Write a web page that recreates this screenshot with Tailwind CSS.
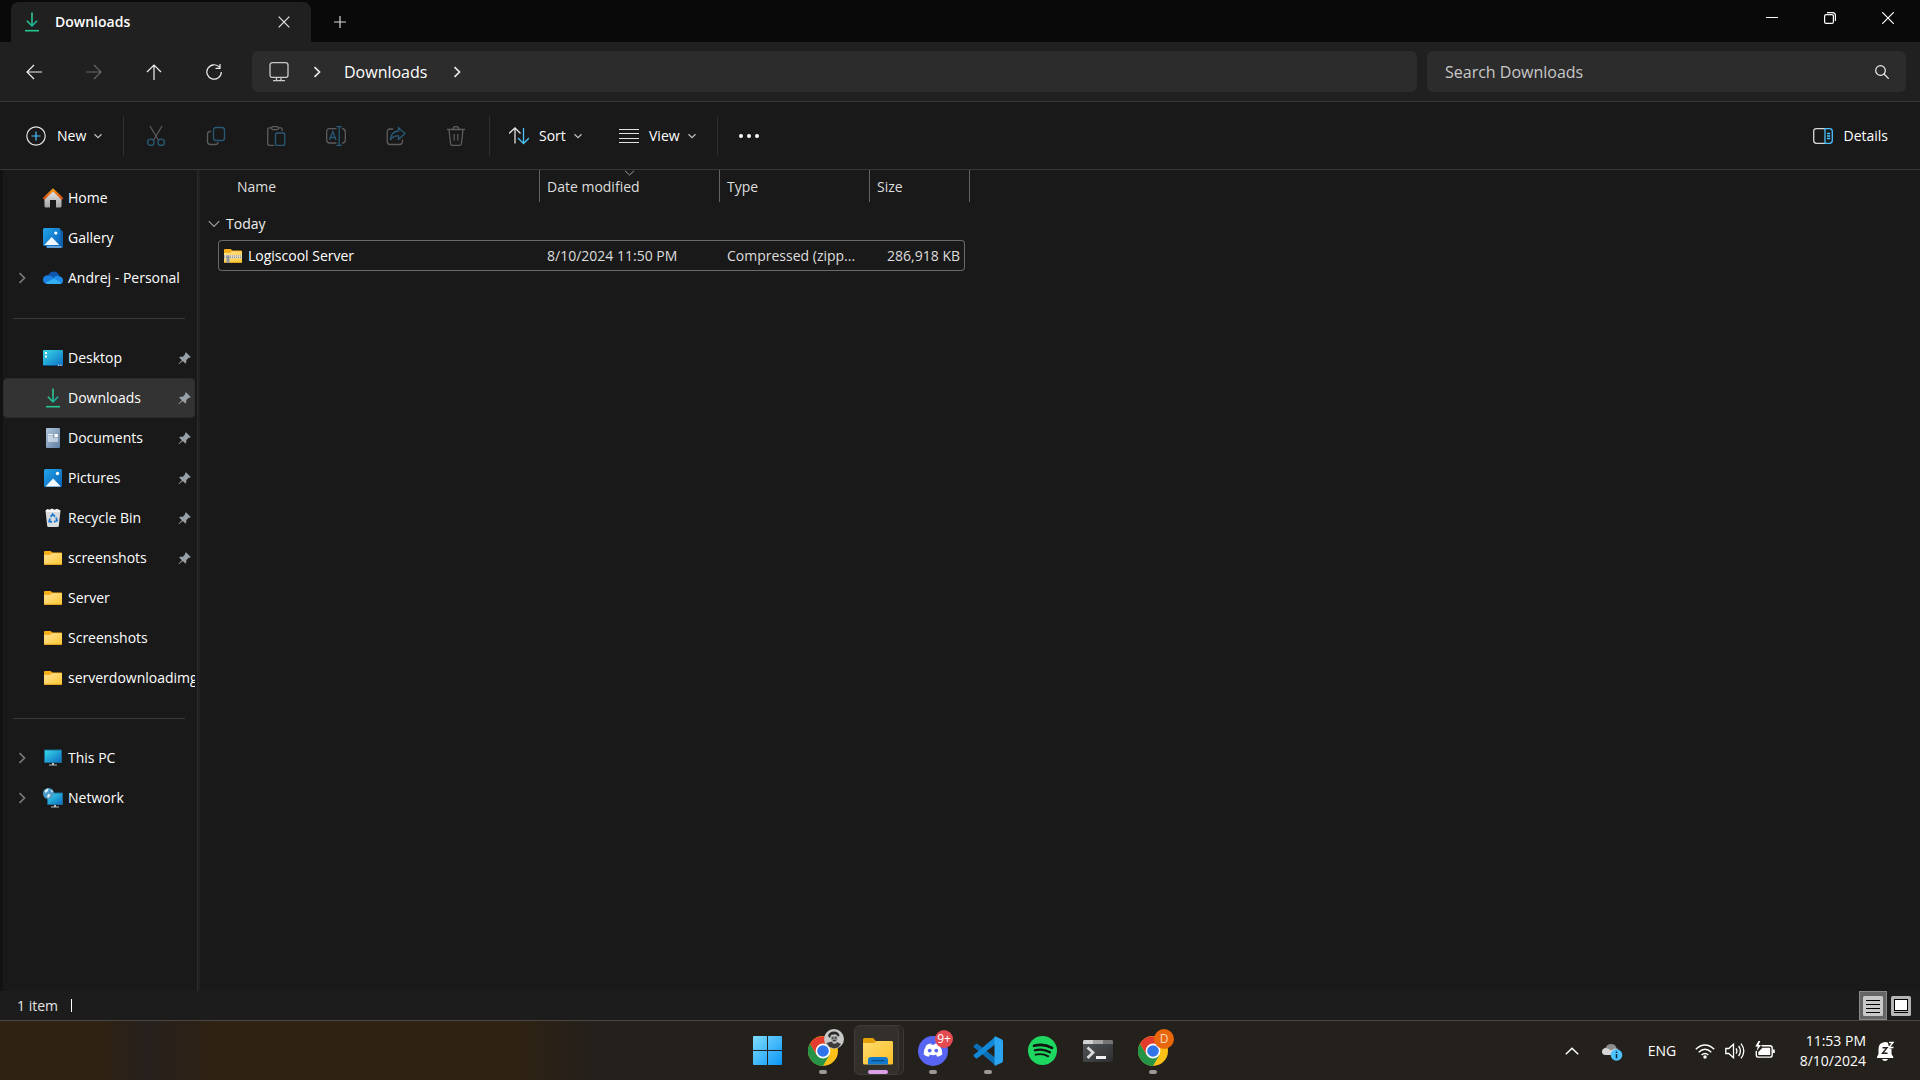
<!DOCTYPE html>
<html lang="en">
<head>
<meta charset="utf-8">
<meta name="viewport" content="width=device-width, initial-scale=1">
<title>Downloads</title>
<script src="https://cdn.jsdelivr.net/npm/@tailwindcss/browser@4"></script>
</head>
<body class="flex h-screen flex-col overflow-hidden bg-[#191919] font-['Open_Sans','Noto_Sans',sans-serif] text-sm text-white">

<!-- Shared icon shapes; kept rendered at zero size so the gradients stay usable -->
<svg class="absolute size-0" aria-hidden="true">
  <defs>
    <linearGradient id="g-green" x1="0" y1="0" x2="1" y2="1"><stop offset="0" stop-color="#3ddc84"/><stop offset="1" stop-color="#12a5a0"/></linearGradient>
    <linearGradient id="g-blue" x1="0" y1="0" x2="1" y2="1"><stop offset="0" stop-color="#22a4ea"/><stop offset="1" stop-color="#0a62b8"/></linearGradient>
    <linearGradient id="g-cyan" x1="0" y1="0" x2="1" y2="1"><stop offset="0" stop-color="#37d8e6"/><stop offset="1" stop-color="#0f6fc6"/></linearGradient>
    <linearGradient id="g-folder" x1="0" y1="0" x2="1" y2="1"><stop offset="0" stop-color="#ffe394"/><stop offset="1" stop-color="#fdc735"/></linearGradient>
    <linearGradient id="g-explorer" x1="0" y1="0" x2="1" y2="1"><stop offset="0" stop-color="#ffdc6e"/><stop offset="1" stop-color="#fcbf26"/></linearGradient>
    <linearGradient id="g-doc" x1="0" y1="0" x2="1" y2="1"><stop offset="0" stop-color="#b2c6dc"/><stop offset="1" stop-color="#5f7fa3"/></linearGradient>
    <linearGradient id="g-grey" x1="0" y1="0" x2="0" y2="1"><stop offset="0" stop-color="#e8e8e8"/><stop offset="1" stop-color="#a3a3a3"/></linearGradient>
    <linearGradient id="g-roof" x1="0" y1="0" x2="0" y2="1"><stop offset="0" stop-color="#f59a1b"/><stop offset="1" stop-color="#d4480f"/></linearGradient>
    <linearGradient id="g-win" x1="0" y1="0" x2="1" y2="1"><stop offset="0" stop-color="#7fdcff"/><stop offset="1" stop-color="#0a96f4"/></linearGradient>
    <linearGradient id="g-term" x1="0" y1="0" x2="1" y2="1"><stop offset="0" stop-color="#55585b"/><stop offset="1" stop-color="#2c2e30"/></linearGradient>
  </defs>
  <symbol id="download" viewBox="0 0 20 20"><path d="M4.300 9.300 10 15l5.700-5.700-1.200-1.100-3.700 3.700V.5H9.200v11.400L5.500 8.200z" fill="url(#g-green)"/><path d="M3 18.700h14" stroke="#27c690" stroke-width="1.600" fill="none"/></symbol>
  <symbol id="chev-r" viewBox="0 0 12 12"><path d="M3.500 1.200 8.500 6l-5 4.800" fill="none" stroke="currentColor" stroke-width="1.700"/></symbol>
  <symbol id="chev-d" viewBox="0 0 10 10"><path d="M1.500 3.200 5 6.600l3.500-3.400" fill="none" stroke="currentColor" stroke-width="1.200"/></symbol>
  <symbol id="pin" viewBox="0 0 14 14"><path d="M8.600.3 13.700 5.400 12.600 6.300 11.700 6.200 9 8.700 8.800 11.600 7.900 12.500 5 9.700.9 13.300.4 12.900 4.100 8.900 1.300 6 2.200 5.200 5.200 5 7.700 2.300 7.600 1.300Z" fill="#98a0a8"/></symbol>
  <symbol id="folder" viewBox="0 0 20 20"><path d="M1 4q0-1 1-1h5.500l2 1.500H18q1 0 1 1V8H1z" fill="#f7b01b"/><path d="M1 7h6l2-1.700h10V16q0 .8-.8.800H1.800Q1 16.800 1 16z" fill="url(#g-folder)"/><path d="M1 16.300h18" stroke="#eaa91f" stroke-width="1"/></symbol>
  <symbol id="chrome" viewBox="0 0 30 30"><circle cx="15" cy="15" r="15" fill="#fbc116"/><path d="M2 7.500A15 15 0 0 0 15 30l6.500-11.200L15 15 8.500 18.700z" fill="#269447"/><path d="M2 7.500 8.600 18.800 15 8h13A15 15 0 0 0 2 7.500z" fill="#e33b2e"/><circle cx="15" cy="15" r="7.400" fill="#fff"/><circle cx="15" cy="15" r="5.800" fill="#2f74e8"/></symbol>
</svg>

<!-- Title bar -->
<header class="flex h-[42px] shrink-0 items-start justify-between bg-[#090909]">
  <div class="flex h-full items-end pl-[11px]">
    <div class="flex h-10 w-[300px] items-center rounded-t-lg bg-[#202020] pl-[11px] pr-[19px]">
      <svg class="size-5"><use href="#download"/></svg>
      <span class="ml-[13px] flex-1 font-semibold">Downloads</span>
      <button aria-label="Close tab" class="flex size-4 items-center justify-center"><svg class="size-3" viewBox="0 0 12 12"><path d="m.7.7 10.600 10.600M11.300.7.7 11.300" stroke="#e8e8e8" stroke-width="1.200"/></svg></button>
    </div>
    <button aria-label="New tab" class="flex h-10 w-[58px] items-center justify-center"><svg class="size-3" viewBox="0 0 12 12"><path d="M6 0v12M0 6h12" stroke="#d8d8d8" stroke-width="1.200"/></svg></button>
  </div>
  <div class="flex pr-[3px]">
    <button aria-label="Minimize" class="flex h-9 w-[58px] items-center justify-center"><svg class="size-3" viewBox="0 0 12 12"><path d="M0 5.500h12" stroke="#fff"/></svg></button>
    <button aria-label="Restore" class="flex h-9 w-[58px] items-center justify-center"><svg class="size-3" viewBox="0 0 12 12" fill="none" stroke="#fff" stroke-width="1.200"><rect x=".6" y="2.600" width="8.800" height="8.800" rx="1.500"/><path d="M3 .6h5.500q2.900 0 2.900 2.900V9"/></svg></button>
    <button aria-label="Close" class="flex h-9 w-[58px] items-center justify-center"><svg class="size-3" viewBox="0 0 12 12"><path d="m.2.2 11.600 11.600M11.800.2.2 11.800" stroke="#fff" stroke-width="1.200"/></svg></button>
  </div>
</header>

<!-- Navigation -->
<nav aria-label="Location" class="flex h-[60px] shrink-0 items-center border-b border-[#3a3a3a] bg-[#202020] pl-1 pr-[14px] text-base">
  <button aria-label="Back" class="flex size-[60px] items-center justify-center"><svg class="size-4" viewBox="0 0 16 16" fill="none" stroke="#f0f0f0" stroke-width="1.200"><path d="M16 8H1M8 1 1 8l7 7"/></svg></button>
  <button aria-label="Forward" disabled class="flex size-[60px] items-center justify-center"><svg class="size-4" viewBox="0 0 16 16" fill="none" stroke="#666" stroke-width="1.200"><path d="M0 8h15M8 1l7 7-7 7"/></svg></button>
  <button aria-label="Up" class="flex size-[60px] items-center justify-center"><svg class="size-4" viewBox="0 0 16 16" fill="none" stroke="#f0f0f0" stroke-width="1.200"><path d="M8 16V1M1 8l7-7 7 7"/></svg></button>
  <button aria-label="Refresh" class="flex size-[60px] items-center justify-center"><svg class="size-4" viewBox="0 0 16 16" fill="none" stroke="#f0f0f0" stroke-width="1.200"><path d="M13.500 3.200A7.200 7.200 0 1 0 15.300 8M14 0v4.400H9.500"/></svg></button>
  <div class="ml-2 flex h-[41px] flex-1 items-center rounded-md bg-[#2c2c2c] pl-4">
    <svg class="size-[22px]" viewBox="0 0 22 22" fill="none" stroke="#c9c9c9" stroke-width="1.300"><rect x="2" y="1.600" width="18" height="14.800" rx="2.500"/><path d="M8.500 16.500v3M13 16.500v3M5 19.700h12"/></svg>
    <svg class="ml-[21px] size-3 text-[#e8e8e8]"><use href="#chev-r"/></svg>
    <a href="#" class="ml-[21px] w-[106px]">Downloads</a>
    <svg class="ml-[1px] size-3 text-[#e8e8e8]"><use href="#chev-r"/></svg>
  </div>
  <label class="ml-[10px] flex h-[41px] w-[479px] items-center rounded-md bg-[#2c2c2c] pl-[18px] pr-[17px]">
    <input type="text" aria-label="Search Downloads" placeholder="Search Downloads" class="min-w-0 flex-1 bg-transparent outline-none placeholder:text-[#c8c8c8]">
    <svg class="size-[14px]" viewBox="0 0 14 14" fill="none" stroke="#f0f0f0" stroke-width="1.200"><circle cx="5.500" cy="5.500" r="4.800"/><path d="m9 9 4.700 4.700"/></svg>
  </label>
</nav>

<!-- Command bar -->
<div role="toolbar" aria-label="Commands" class="flex h-[68px] shrink-0 items-center border-b border-[#383838] px-[26px]">
  <button class="flex items-center"><svg class="size-5" viewBox="0 0 20 20" fill="none" stroke="#e0e0e0" stroke-width="1.200"><circle cx="10" cy="10" r="9.200"/><path d="M10 5.500v9M5.500 10h9" stroke="#4cc2ff"/></svg><span class="ml-[11px] w-9 text-left">New</span><svg class="size-[10px] text-[#c0c0c0]"><use href="#chev-d"/></svg></button>
  <span class="ml-5 mr-[2px] h-10 w-px bg-[#2e2e2e]"></span>
  <button aria-label="Cut" disabled class="flex h-10 w-[60px] items-center justify-center"><svg class="size-5" viewBox="0 0 20 20" fill="none" stroke="#5c5c5c" stroke-width="1.200"><path d="M4 0l8.500 14.200M16 0 7.500 14.200"/><g stroke="#285a78" stroke-width="1.400"><circle cx="4.800" cy="16.300" r="3.200"/><circle cx="15.200" cy="16.300" r="3.200"/></g></svg></button>
  <button aria-label="Copy" disabled class="flex h-10 w-[60px] items-center justify-center"><svg class="size-5" viewBox="0 0 20 20" fill="none" stroke="#5c5c5c" stroke-width="1.300"><path d="M5 5.500H4q-2.500 0-2.500 2.500v7.500q0 3 3 3h5q2.500 0 2.500-2.500"/><rect x="7.500" y="1.500" width="11" height="13" rx="2.500" stroke="#285a78"/></svg></button>
  <button aria-label="Paste" disabled class="flex h-10 w-[60px] items-center justify-center"><svg class="size-5" viewBox="0 0 20 20" fill="none" stroke="#5c5c5c" stroke-width="1.300"><path d="M5.500 1.800h-2Q1.700 1.800 1.700 3.600v14q0 1.800 1.800 1.800H8M12.500 1.800h2q1.800 0 1.800 1.800V5"/><rect x="5.500" y=".6" width="7" height="3" rx="1.500"/><rect x="9.500" y="7" width="9.300" height="12.400" rx="1.500" stroke="#285a78"/></svg></button>
  <button aria-label="Rename" disabled class="flex h-10 w-[60px] items-center justify-center"><svg class="size-5" viewBox="0 0 20 20" fill="none" stroke="#5c5c5c" stroke-width="1.300"><path d="M10.500 2.700h-7Q.7 2.700.7 5.500v8.500q0 3 3 3h6.800M16 2.700q3.300.3 3.300 3v8.300q0 3-3.300 3"/><path d="M13.200.7v18.600M10.500.7H16M10.500 19.300H16M3.500 14 6.800 5.500 10 14M4.600 11.500H9" stroke="#285a78"/></svg></button>
  <button aria-label="Share" disabled class="flex h-10 w-[60px] items-center justify-center"><svg class="size-5" viewBox="0 0 20 20" fill="none" stroke="#5c5c5c" stroke-width="1.300"><path d="M7 3H4Q1.200 3 1.200 5.800v9.700q0 3 3 3h9.300q3 0 3-3V13.500"/><path d="M12.500 1.700 19 7.500l-6.500 5.800V10q-5.500-.6-8 4 .3-8.500 8-9z" stroke="#285a78"/></svg></button>
  <button aria-label="Delete" disabled class="flex h-10 w-[60px] items-center justify-center"><svg class="size-5" viewBox="0 0 20 20" fill="none" stroke="#5c5c5c" stroke-width="1.300"><path d="M1 3.500h18M7 3.500q0-3 3-3t3 3M3 3.500l1.500 13.800q.2 2 2.200 2h6.600q2 0 2.200-2L17 3.500M8.200 8v6.500M11.800 8v6.500"/></svg></button>
  <span class="ml-[3px] mr-[19px] h-10 w-px bg-[#2e2e2e]"></span>
  <button class="flex items-center"><svg class="size-5" viewBox="0 0 20 20" fill="none" stroke="#e0e0e0" stroke-width="1.300"><path d="M6 17.500V2M0 7.500 6 2l5.500 5.500"/><path d="M14.500 2v15.500M9 12l5.500 5.500 5.500-5.500" stroke="#4cc2ff"/></svg><span class="ml-[10px] w-[34px] text-left">Sort</span><svg class="size-[10px] text-[#c0c0c0]"><use href="#chev-d"/></svg></button>
  <button class="ml-9 flex items-center"><svg class="size-5" viewBox="0 0 20 20" stroke="#e0e0e0"><path d="M0 3.500h20M0 7.500h20M0 12.500h20M0 16.500h20"/></svg><span class="ml-[10px] w-[38px] text-left">View</span><svg class="size-[10px] text-[#c0c0c0]"><use href="#chev-d"/></svg></button>
  <span class="ml-5 mr-5 h-10 w-px bg-[#2e2e2e]"></span>
  <button aria-label="See more" class="flex h-10 items-center"><svg class="h-5 w-[22px]" viewBox="0 0 22 20" fill="#fff"><circle cx="3" cy="10" r="2"/><circle cx="11" cy="10" r="2"/><circle cx="19" cy="10" r="2"/></svg></button>
  <button class="ml-auto mr-[6px] flex items-center gap-[10px]"><svg class="size-5" viewBox="0 0 20 20" fill="none" stroke="#d8d8d8" stroke-width="1.300"><path d="M12 2.600H3.500Q.7 2.600.7 5.400v9.200q0 2.800 2.800 2.800H12"/><path d="M12 2.600h4.500q2.800 0 2.800 2.800v9.200q0 2.800-2.800 2.800H12zM14 7.500h3.200M14 10h3.200M14 12.500h3.200" stroke="#4cc2ff"/></svg>Details</button>
</div>

<div class="flex min-h-0 flex-1">
  <!-- Folder tree -->
  <aside class="flex w-[200px] shrink-0 border-r-2 border-[#202020]">
    <nav aria-label="Folders" class="min-w-0 flex-1 border-l-[3px] border-r border-l-[#121212] border-r-[#2b2b2b] pt-2">
      <ul class="w-48 overflow-hidden whitespace-nowrap">
        <li><a href="#" class="flex h-10 items-center gap-[5px] pl-10"><svg class="size-5 shrink-0" viewBox="0 0 20 20"><path d="M1.500 9.500 10 2l8.500 7.500V18q0 1.500-1.500 1.500h-4V12H7v7.500H3Q1.500 19.500 1.500 18z" fill="url(#g-grey)"/><path d="M1 10.300 10 1.800l9 8.500" fill="none" stroke="url(#g-roof)" stroke-width="2.400" stroke-linecap="round"/></svg>Home</a></li>
        <li><a href="#" class="flex h-10 items-center gap-[5px] pl-10"><svg class="size-5 shrink-0" viewBox="0 0 20 20"><rect x="3" y="2.500" width="17" height="17.500" rx="1.500" fill="#0f5ea8"/><path d="M4 18.300h14.500v1.300H4z" fill="#8fc3ee"/><rect width="17.500" height="18" rx="1.500" fill="url(#g-blue)"/><path d="m1.300 17 7.400-8 7.600 8z" fill="#eef6fd"/><circle cx="12.800" cy="5" r="1.600" fill="#fff"/></svg>Gallery</a></li>
        <li><a href="#" class="flex h-10 items-center pl-[13px]"><svg class="mr-[15px] size-3 shrink-0 text-[#777]"><use href="#chev-r"/></svg><svg class="mr-[5px] size-5 shrink-0" viewBox="0 0 20 20"><path d="M5 8q1.500-4.500 6-4.500 4.500.3 5.500 5l-6 4z" fill="#0e57ad"/><path d="M4.500 16Q0 15.500 0 11.700 0 7.500 5 7.300q3 .2 6 3l-3 5.700z" fill="#1b7fe0"/><path d="M10 10q4-3.500 7-1.500 3 .8 3 4 0 3.500-3.500 3.500H10z" fill="#1c8de8"/><path d="M2.500 14.800 11 10.500l7.500 4.500q-.8 1-2.500 1H5q-1.500 0-2.500-1.200z" fill="#32aef2"/></svg>Andrej - Personal</a></li>
        <li role="separator" class="flex h-10 items-center pl-[10px] pr-[10px]"><span class="h-px w-full bg-[#3a3a3a]"></span></li>
        <li><a href="#" class="flex h-10 items-center gap-[5px] pl-10 pr-1"><svg class="size-5 shrink-0" viewBox="0 0 20 20"><rect y="2" width="20" height="16" rx="1" fill="url(#g-cyan)"/><path d="M2 4h2v2H2zM2 7.500h2v2H2z" fill="#fff"/><path d="M0 17h20v1H0z" fill="#0b4f8e"/><path d="M15 16.800h1.300v1H15zM17.300 16.800h1.300v1h-1.300z" fill="#fff"/></svg>Desktop<svg class="ml-auto size-[13px]"><use href="#pin"/></svg></a></li>
        <li><a href="#" aria-current="page" class="flex h-10 items-center gap-[5px] rounded-sm border border-[#2c2c2c] bg-[#333] pl-[39px] pr-[3px]"><svg class="size-5 shrink-0"><use href="#download"/></svg>Downloads<svg class="ml-auto size-[13px]"><use href="#pin"/></svg></a></li>
        <li><a href="#" class="flex h-10 items-center gap-[5px] pl-10 pr-1"><svg class="size-5 shrink-0" viewBox="0 0 20 20"><rect x="3" width="14" height="20" rx="1" fill="url(#g-doc)"/><path d="M5 6.700h5M5 9h5M5 11h10M5 13h10" stroke="#fff"/><path d="M11.500 6h3.300v3.200h-3.300z" fill="#fff"/></svg>Documents<svg class="ml-auto size-[13px]"><use href="#pin"/></svg></a></li>
        <li><a href="#" class="flex h-10 items-center gap-[5px] pl-10 pr-1"><svg class="size-5 shrink-0" viewBox="0 0 20 20"><rect x="1" y="1" width="18" height="18" rx="1.500" fill="url(#g-blue)"/><path d="m2.500 18.500 7.700-8 7.600 8z" fill="#f2f8fd"/><circle cx="14.500" cy="5.500" r="1.700" fill="#fff"/></svg>Pictures<svg class="ml-auto size-[13px]"><use href="#pin"/></svg></a></li>
        <li><a href="#" class="flex h-10 items-center gap-[5px] pl-10 pr-1"><svg class="size-5 shrink-0" viewBox="0 0 20 20"><path d="M2.500 2.500h15L15.800 18q-.1 1-1.200 1H5.400q-1.100 0-1.200-1z" fill="#d9dcdf"/><path d="m2.500 2.500 2-1.500 2 .8 2.500-1.300 2.500 1.200 2.500-1 3.500 1.800-1 1.500h-13z" fill="#f4f4f4"/><path d="m7.700 9 2-2.800 2.300 2.500M13 9.500l1 3-3 1.300M9 14l-2.800-.5.8-3" fill="none" stroke="#1b7bd0" stroke-width="1.800"/></svg>Recycle Bin<svg class="ml-auto size-[13px]"><use href="#pin"/></svg></a></li>
        <li><a href="#" class="flex h-10 items-center gap-[5px] pl-10 pr-1"><svg class="size-5 shrink-0"><use href="#folder"/></svg>screenshots<svg class="ml-auto size-[13px]"><use href="#pin"/></svg></a></li>
        <li><a href="#" class="flex h-10 items-center gap-[5px] pl-10"><svg class="size-5 shrink-0"><use href="#folder"/></svg>Server</a></li>
        <li><a href="#" class="flex h-10 items-center gap-[5px] pl-10"><svg class="size-5 shrink-0"><use href="#folder"/></svg>Screenshots</a></li>
        <li><a href="#" class="flex h-10 items-center gap-[5px] pl-10"><svg class="size-5 shrink-0"><use href="#folder"/></svg>serverdownloadimg</a></li>
        <li role="separator" class="flex h-10 items-center pl-[10px] pr-[10px]"><span class="h-px w-full bg-[#3a3a3a]"></span></li>
        <li><a href="#" class="flex h-10 items-center pl-[13px]"><svg class="mr-[15px] size-3 shrink-0 text-[#777]"><use href="#chev-r"/></svg><svg class="mr-[5px] size-5 shrink-0" viewBox="0 0 20 20"><rect x="1" y="1.500" width="18" height="13.500" rx=".8" fill="#1a6a94"/><rect x="2" y="2.500" width="16" height="11.500" fill="url(#g-cyan)"/><path d="M9 15h2v1.500h3v1H6v-1h3z" fill="#b9c0c6"/></svg>This PC</a></li>
        <li><a href="#" class="flex h-10 items-center pl-[13px]"><svg class="mr-[15px] size-3 shrink-0 text-[#777]"><use href="#chev-r"/></svg><svg class="mr-[5px] size-5 shrink-0" viewBox="0 0 20 20"><rect x="4" y="4.500" width="16" height="12.500" rx=".8" fill="#1a6a94"/><rect x="5" y="5.500" width="14" height="10.500" fill="url(#g-cyan)"/><path d="M11 17h2v1.500h3v1H8v-1h3z" fill="#b9c0c6"/><circle cx="5.500" cy="5.500" r="5.500" fill="#4f9cc8"/><path d="M1.500 3q2-3 4-2.500L5 3 2.500 5zM5 6l2.500.5L6 9.800 4 9zM8 1.500l2 2-1.500 1z" fill="#dcf0f8"/></svg>Network</a></li>
      </ul>
    </nav>
  </aside>

  <!-- File list -->
  <main class="min-w-0 flex-1">
    <table class="w-[770px] table-fixed border-separate border-spacing-0 text-left text-[#dedede]">
      <colgroup><col class="w-[18px]"><col class="w-[322px]"><col class="w-[180px]"><col class="w-[150px]"><col class="w-[95px]"><col class="w-[5px]"></colgroup>
      <thead>
        <tr class="h-8">
          <th scope="col" colspan="2" class="border-r border-[#636363] pl-[37px] pt-[2px] font-normal">Name</th>
          <th scope="col" aria-sort="descending" class="relative border-r border-[#636363] pl-[7px] pt-[2px] font-normal">Date modified<svg class="absolute left-[84px] top-0 h-[6px] w-[11px]" viewBox="0 0 11 6"><path d="m1 .8 4.500 4.200L10 .8" fill="none" stroke="#9a9a9a"/></svg></th>
          <th scope="col" class="border-r border-[#636363] pl-[7px] pt-[2px] font-normal">Type</th>
          <th scope="col" colspan="2" class="border-r border-[#636363] pl-[7px] pt-[2px] font-normal">Size</th>
        </tr>
      </thead>
      <tbody>
        <tr class="h-[38px]"><th scope="rowgroup" colspan="6" class="pl-2 pt-[6px] font-normal text-[#f0f0f0]"><button class="flex items-center gap-[6px]"><svg class="size-3" viewBox="0 0 12 12"><path d="m.8 3.200 5.200 5.300 5.200-5.300" fill="none" stroke="#a0a0a0" stroke-width="1.100"/></svg>Today</button></th></tr>
        <tr class="h-[31px]">
          <td></td>
          <td class="rounded-l-sm border-y border-l border-[#6a6a6a] pl-1 text-white"><a href="#" class="flex items-center gap-[5px]"><svg class="size-5" viewBox="0 0 20 20"><use href="#folder"/><path d="M1 9h18v3.500H1z" fill="#e3dcc6"/><path d="M1 10h18M1 11.500h18" stroke="#888" stroke-width=".9" stroke-dasharray="1 1"/><path d="M3.500 9.500h3V17h-3z" fill="#8f9499"/></svg>Logiscool Server</a></td>
          <td class="border-y border-[#6a6a6a] pl-[7px]">8/10/2024 11:50 PM</td>
          <td class="border-y border-[#6a6a6a] pl-[7px]">Compressed (zipp...</td>
          <td class="rounded-r-sm border-y border-r border-[#6a6a6a] pr-1 text-right">286,918 KB</td>
          <td></td>
        </tr>
      </tbody>
    </table>
  </main>
</div>

<!-- Status bar -->
<footer class="flex h-[30px] shrink-0 items-center border-b border-[#4a4742] bg-[#1c1c1c] pl-[17px] pr-2">
  <span class="text-[#e4e4e4]">1 item</span><span class="ml-[13px] h-[13px] w-px bg-white"></span>
  <button aria-label="Details view" aria-pressed="true" class="ml-auto flex h-[29px] w-7 items-center justify-center border border-[#8a8a8a] bg-[#666]"><svg class="size-5" viewBox="0 0 20 20"><rect width="20" height="20" rx="1.500" fill="#c8c8c8"/><path d="M3 4.500h14M3 8.500h14M3 12.500h14M3 16.500h14" stroke="#000"/></svg></button>
  <button aria-label="Large icons view" class="ml-1 mr-[1px]"><svg class="size-5" viewBox="0 0 20 20"><rect width="20" height="20" rx="1.500" fill="#b4b4b4"/><rect x="3.500" y="3.500" width="13" height="11" fill="#fff" stroke="#000"/><path d="M3 16.500h14" stroke="#000"/></svg></button>
</footer>

<!-- Taskbar -->
<div class="grid h-[59px] shrink-0 grid-cols-[1fr_auto_1fr] bg-[#24201b]">
  <div class="bg-linear-to-r from-[#2f2213] from-[70%] to-[#24201b] to-[80%]">
    <div class="h-full bg-linear-to-r from-transparent from-[14%] via-[#27201d] via-[20%] to-transparent to-[29%]"></div>
  </div>
  <div class="flex">
    <button aria-label="Start" class="flex w-[55px] items-center justify-center"><svg class="size-[29px]" viewBox="0 0 29 29"><path d="M0 1q0-1 1-1h13v14H0zM15 0h13q1 0 1 1v13H15zM0 15h14v14H1q-1 0-1-1zM15 15h14v13q0 1-1 1H15z" fill="url(#g-win)"/></svg></button>
    <button aria-label="Chrome" class="relative flex w-[55px] items-center justify-center"><svg class="size-[30px]"><use href="#chrome"/></svg><svg class="absolute left-[29px] top-2 size-5" viewBox="0 0 20 20"><circle cx="10" cy="10" r="10" fill="#c8c8c8"/><path d="M4 7q1-4.500 6-4.500T15.500 7l-1.500.5q-1-2-3-2.200L7 6 6 9z" fill="#2a2a2a"/><path d="M7 7.500 13 7l.5 3-1.500 3H9L7 10z" fill="#8a8a8a"/><path d="M2.500 14 8 12.500l1 2h3l1-1.500 4 2-3 3.500-4 1-4.500-1.500z" fill="#3c3c3c"/><path d="M8 9h1.500M11 9h1.500M9.500 11.500h2" stroke="#222"/></svg><span class="absolute bottom-[6px] h-1 w-2 rounded-full bg-[#9b9895]"></span></button>
    <button aria-label="File Explorer" aria-pressed="true" class="relative flex w-[55px] items-center justify-center"><span class="absolute left-1 top-1 h-[50px] w-[50px] rounded-md border border-[#3c3834] bg-[#2b2723]"></span><span class="absolute left-1 top-1 h-[50px] w-[45px] rounded-md border border-[#3f3b37] bg-[#332f2b]"></span><svg class="relative size-[30px]" viewBox="0 0 30 30"><path d="M0 3.500Q0 2 1.500 2H10l3 3H28q2 0 2 2v4H0z" fill="#e3a008"/><path d="M0 7h11l3-2h14.500Q30 5 30 6.500V27q0 1.500-1.500 1.500h-27Q0 28.500 0 27z" fill="url(#g-explorer)"/><path d="M5 28.500V24q0-3 3-3h14q3 0 3 3v4.500z" fill="#1279cc"/><path d="M8.500 24.600h13" stroke="#074b89" stroke-width="1.200"/></svg><span class="absolute bottom-[6px] h-1 w-5 rounded-full bg-[#d9a0e6]"></span></button>
    <button aria-label="Discord" class="relative flex w-[55px] items-center justify-center"><svg class="size-[30px]" viewBox="0 0 30 30"><circle cx="15" cy="15" r="15" fill="#5865f2"/><path d="M8.500 9q2-1.200 4.500-1.500l.7 1.200h2.600l.7-1.200q2.500.3 4.500 1.500 3 4.500 2.800 9.500-2.300 2-5 2.300l-1.200-2q-3 .8-6.200 0l-1.200 2q-2.700-.3-5-2.300Q5.500 13.500 8.500 9z" fill="#fff"/><circle cx="11.700" cy="14.600" r="1.900" fill="#5865f2"/><circle cx="18.300" cy="14.600" r="1.900" fill="#5865f2"/></svg><span class="absolute left-[30px] top-[9px] flex size-[18px] items-center justify-center rounded-full bg-[#e34b50] text-xs font-medium leading-none">9+</span><span class="absolute bottom-[6px] h-1 w-2 rounded-full bg-[#9b9895]"></span></button>
    <button aria-label="Visual Studio Code" class="relative flex w-[55px] items-center justify-center"><svg class="size-[30px]" viewBox="0 0 30 30"><path d="m1 9.500 2-1.700q.7-.4 1.400 0L22 21.500V29L.9 11.300Q.1 10.300 1 9.500z" fill="#0b6fb5"/><path d="m1 20.500 2 1.700q.7.400 1.400 0L22 8.500V1L.9 18.700q-.8 1 .1 1.800z" fill="#1287d6"/><path d="M21.500.5 22 .2 28.700 3.200Q30 4 30 5.300v19.400q0 1.300-1.300 2.100L22 29.800l-.5-.3z" fill="#2ba5f0"/></svg><span class="absolute bottom-[6px] h-1 w-2 rounded-full bg-[#9b9895]"></span></button>
    <button aria-label="Spotify" class="flex w-[55px] items-center justify-center"><svg class="size-[29px]" viewBox="0 0 29 29" fill="none" stroke="#101510" stroke-linecap="round"><circle cx="14.500" cy="14.500" r="14.500" fill="#1ed760" stroke="none"/><path d="M6 9.800q9.500-2.600 18 2" stroke-width="2.600"/><path d="M6.800 14.300q8.300-2.200 15.200 2" stroke-width="2.200"/><path d="M7.500 18.700q7-1.700 12.800 1.700" stroke-width="1.800"/></svg></button>
    <button aria-label="Terminal" class="flex w-[55px] items-center justify-center"><svg class="size-[30px]" viewBox="0 0 30 30"><rect y="4" width="30" height="22" rx="1.500" fill="url(#g-term)"/><path d="M0 8V5.500Q0 4 1.500 4H10v4z" fill="#d2d2d2"/><path d="M10 4h10v4H10z" fill="#a3a3a3"/><path d="M20 4h8.500Q30 4 30 5.500V8H20z" fill="#757575"/><path d="m4.500 11.500 5.500 5-5.500 5.500" fill="none" stroke="#d8d8d8" stroke-width="2.800"/><path d="M13 20h10v3H13z" fill="#f0f0f0"/></svg></button>
    <button aria-label="Chrome, profile D" class="relative flex w-[55px] items-center justify-center"><svg class="size-[30px]"><use href="#chrome"/></svg><span class="absolute left-[29px] top-2 flex size-5 items-center justify-center rounded-full bg-[#e8660c] text-xs leading-none text-[#ffd9bd]">D</span><span class="absolute bottom-[6px] h-1 w-2 rounded-full bg-[#9b9895]"></span></button>
  </div>
  <div class="flex items-center justify-end pr-6">
    <button aria-label="Show hidden icons"><svg class="h-3 w-[14px]" viewBox="0 0 14 12"><path d="m.8 9.200 6.200-6 6.200 6" fill="none" stroke="#fff" stroke-width="1.500"/></svg></button>
    <svg class="ml-[22px] h-5 w-[22px]" viewBox="0 0 22 20"><path d="M5 14Q1 14 1 10.500q.3-3 3.500-3.500Q6 3 10 3q4.500.2 5.500 4 2.500.8 2 4l-4 3z" fill="#8d8d8d"/><path d="M4.500 14Q1 13.500 1 10.500 1.500 7 5 7q2 0 5 2.500L15 7l-4 7z" fill="#d6d6d6"/><circle cx="15.500" cy="14" r="5.800" fill="#4cc2ff"/><path d="M15.500 13v4.200M15.500 10.500v1.500" stroke="#0a2638" stroke-width="1.500"/></svg>
    <button class="ml-6 w-[30px]">ENG</button>
    <svg class="ml-[18px] size-5" viewBox="0 0 20 20" fill="none" stroke="#fff" stroke-width="1.500"><path d="M.8 8.200q9.200-8.400 18.400 0M3.700 11.200q6.300-5.800 12.600 0M6.600 14q3.400-3 6.800 0"/><circle cx="10" cy="16" r="1" fill="#fff"/></svg>
    <svg class="ml-[10px] size-5" viewBox="0 0 20 20" fill="none" stroke="#fff" stroke-width="1.300"><path d="M.8 7.500h3L8.500 3.200v13.600L3.800 12.500h-3zM11 7.300q1.800 2.700 0 5.400M13.600 5q3.600 5 0 10M16 2.600q5.600 7.400 0 14.800"/></svg>
    <svg class="ml-[10px] size-5" viewBox="0 0 20 20"><path d="M6.500 4.700H15q2.200 0 2.200 2.200v7q0 2.200-2.200 2.200H3.500q-2.200 0-2.200-2.200V10" fill="none" stroke="#fff" stroke-width="1.400"/><path d="M7.500 6.700h7.700v7.400H3.300v-3z" fill="#fff"/><path d="M18 8.500h1.800v3.500H18z" fill="#fff"/><path d="M3.500 0 .3 5.500h2.400L1.700 10 6 4h-2.500L5.300 0z" fill="#fff"/></svg>
    <button class="ml-[22px] w-[69px] text-right leading-5">11:53 PM<br>8/10/2024</button>
    <svg class="ml-[10px] size-5" viewBox="0 0 20 20"><path d="M9 1q6.500 0 6.500 7v5l1.800 3v1H1v-1l1.500-3V8Q2.500 1.500 9 1z" fill="#fff"/><path d="M6 18h6q-.8 2-3 2t-3-2z" fill="#fff"/><path d="M11.500.500h7V7.500h-5z" fill="#24201b"/><path d="M13 1.500h4L13 6.500h4.500" fill="none" stroke="#fff" stroke-width="1.400"/><path d="M6.500 6.800H11l-4.500 5.500h5" fill="none" stroke="#24201b" stroke-width="1.400"/></svg>
  </div>
</div>
</body>
</html>
